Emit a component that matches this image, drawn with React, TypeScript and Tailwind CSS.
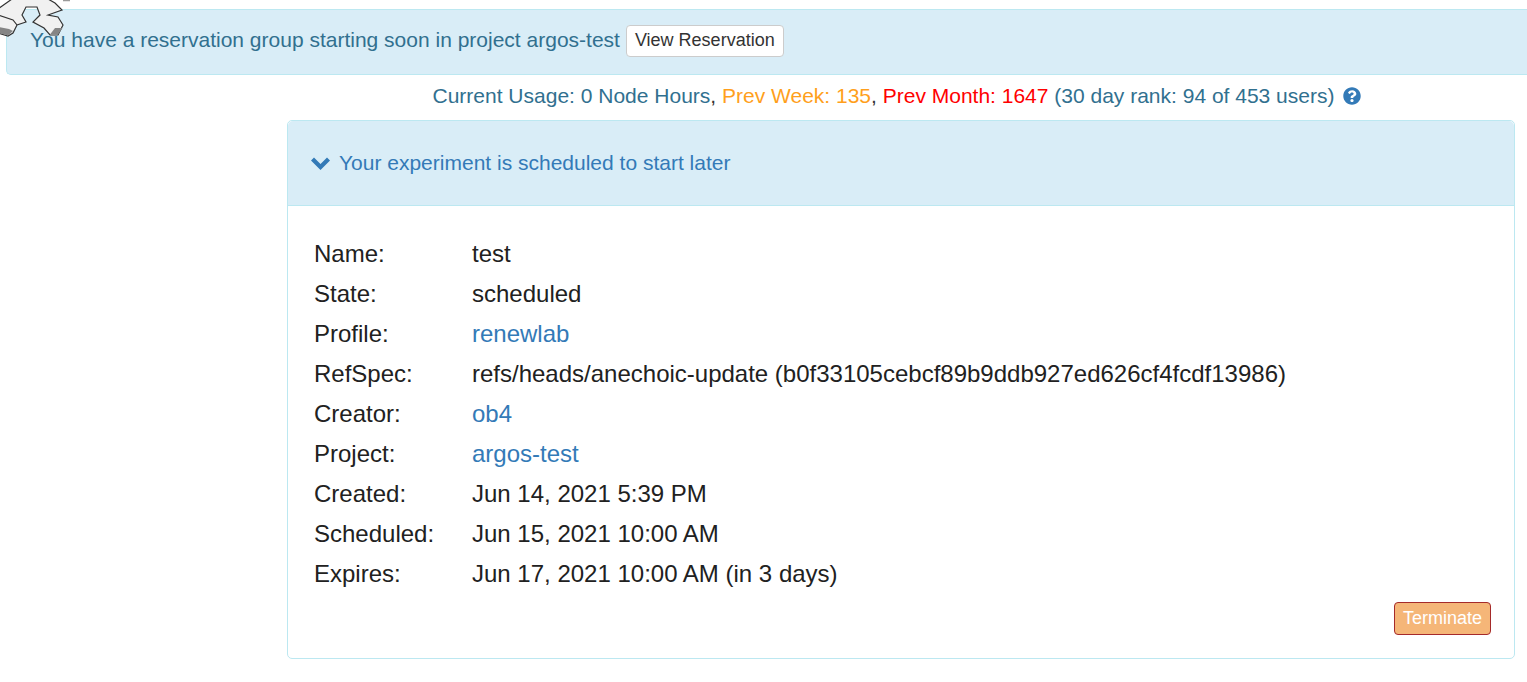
import { FaQuestionCircle } from "react-icons/fa";

const rows: { label: string; value: string; link?: boolean }[] = [
  { label: "Name:", value: "test" },
  { label: "State:", value: "scheduled" },
  { label: "Profile:", value: "renewlab", link: true },
  { label: "RefSpec:", value: "refs/heads/anechoic-update (b0f33105cebcf89b9ddb927ed626cf4fcdf13986)" },
  { label: "Creator:", value: "ob4", link: true },
  { label: "Project:", value: "argos-test", link: true },
  { label: "Created:", value: "Jun 14, 2021 5:39 PM" },
  { label: "Scheduled:", value: "Jun 15, 2021 10:00 AM" },
  { label: "Expires:", value: "Jun 17, 2021 10:00 AM (in 3 days)" },
];

function Logo() {
  return (
    <svg className="absolute left-0 top-0" width="72" height="40" viewBox="0 0 72 40">
      <path
        d="M12 -1 L-2 9 L-2 33 L8 36 L13 33 L17 25 L26 22 L22 15 L26 7 L37 7 L40 15 L33 22 L44 28 L50 35 L58 35 L63 25 L58 17 L48 15 L62 10 L55 3 L48 -1 Z"
        fill="#f1f1f1"
        stroke="#333"
        strokeWidth="1.2"
      />
      <path d="M-2 15 L13 20 L17 25" fill="none" stroke="#333" strokeWidth="1.2" />
      <path d="M-2 27 L9 29 L13 31 L8 35.5 L-2 33 Z" fill="#858585" />
      <path d="M55 28 L62.5 28 L58 34.5 L50 34.5 Z" fill="#858585" />
      <path d="M63 0.5 L70 0.5" stroke="#9a9a9a" strokeWidth="1.5" />
    </svg>
  );
}

export default function App() {
  return (
    <div className="relative h-[682px] overflow-hidden bg-white font-['Liberation_Sans',Arial,sans-serif] text-[21px] leading-[30px] text-[#212121]">
      <div className="pl-[6px] pt-[9px]">
        <div className="flex h-[66px] items-center rounded-bl-[5px] border border-r-0 border-[#bce8f1] bg-[#d9edf7] pb-[4px] pl-[23px] text-[#31708f]">
          <span>You have a reservation group starting soon in project argos-test</span>
          <button className="ml-[6px] mt-[2px] flex h-[32px] items-center rounded-[4px] border border-[#ccc] bg-white px-2 pb-[2px] text-[18px] text-[#333]">
            View Reservation
          </button>
        </div>
      </div>
      <div className="flex h-[45px] items-center justify-center pb-[3px] pl-[267px] text-[#31708f]">
        <span>
          Current Usage: 0 Node Hours<span className="text-[#333]">, </span>
          <span className="text-[#ff9f1c]">Prev Week: 135</span>
          <span className="text-[#333]">, </span>
          <span className="text-[#ff0000]">Prev Month: 1647</span> (30 day rank: 94 of 453 users)
        </span>
        <FaQuestionCircle size={18} className="ml-[9px] text-[#337ab7]" />
      </div>
      <div className="ml-[287px] mr-[12px] rounded-[5px] border border-[#bce8f1]">
        <div className="flex h-[85px] items-center rounded-t-[5px] border-b border-[#bce8f1] bg-[#d9edf7] pl-[23px] text-[#337ab7]">
          <svg width="19" height="13" viewBox="0 0 19 13" className="mr-[9px] fill-current">
            <path d="M0 3.5 L3 0.5 L9.5 7 L16 0.5 L19 3.5 L9.5 13 Z" />
          </svg>
          Your experiment is scheduled to start later
        </div>
        <div className="px-[26px] pt-[28px] pb-[23px] text-[24px]">
          {rows.map((r) => (
            <div key={r.label} className="flex h-[40px] items-center">
              <span className="w-[158px]">{r.label}</span>
              <span className={r.link ? "text-[#337ab7]" : ""}>{r.value}</span>
            </div>
          ))}
          <div className="flex justify-end pt-[8px] -mr-[3px]">
            <button className="flex h-[33px] w-[97px] items-center justify-center rounded-[4px] border border-[#a52a2a] bg-[#f5b678] pb-[2px] text-[18px] text-white">
              Terminate
            </button>
          </div>
        </div>
      </div>
      <Logo />
    </div>
  );
}
